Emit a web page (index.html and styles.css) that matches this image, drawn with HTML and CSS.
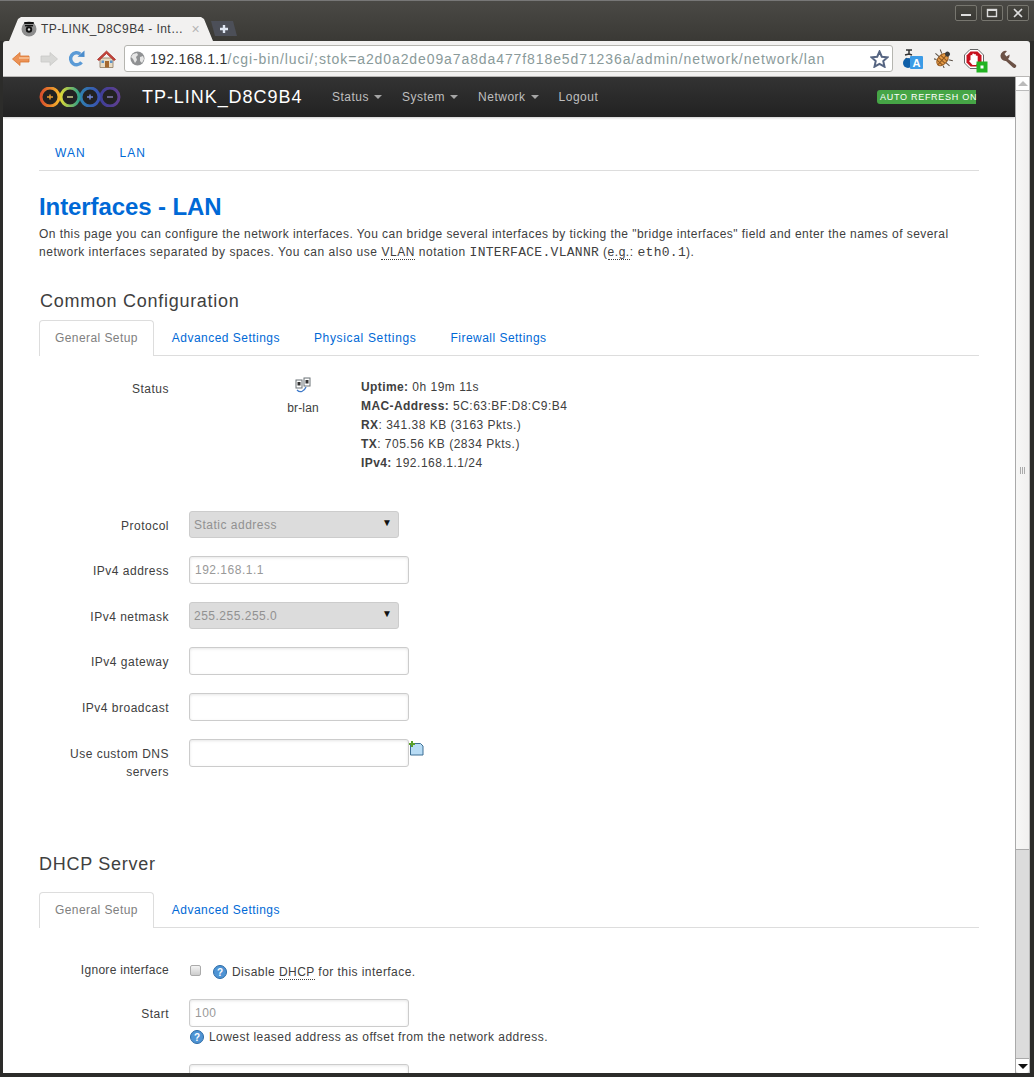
FILE: index.html
```html
<!DOCTYPE html>
<html lang="en">
<head>
<meta charset="utf-8">
<title>TP-LINK_D8C9B4 - Interfaces - LAN</title>
<link rel="stylesheet" href="styles.css">
</head>
<body>
<div class="window">
  <header class="titlebar">
    <div class="tabstrip">
      <div class="tab">
        <svg class="favicon" width="16" height="16" viewBox="0 0 16 16"><circle cx="8" cy="8" r="7.5" fill="#8d8d8d"/><rect x="3" y="1" width="10" height="2" rx="1" fill="#111"/><rect x="4" y="4" width="8" height="1.4" fill="#111"/><circle cx="8" cy="8.5" r="3.2" fill="#111"/><circle cx="8" cy="8.5" r="1.2" fill="#ddd"/></svg>
        <span class="tab-title">TP-LINK_D8C9B4 - Int…</span>
        <span class="tab-close">×</span>
      </div>
      <div class="newtab"><svg width="10" height="10" viewBox="0 0 10 10"><path d="M5 1v8M1 5h8" stroke="#dfe6f2" stroke-width="2.4"/></svg></div>
    </div>
    <div class="winbtns">
      <div class="winbtn"><svg width="12" height="10" viewBox="0 0 12 10"><path d="M1 7h10" stroke="#ddd" stroke-width="2"/></svg></div>
      <div class="winbtn"><svg width="12" height="10" viewBox="0 0 12 10"><rect x="1.500" y="1.500" width="9" height="7" fill="none" stroke="#ddd" stroke-width="1.400"/><path d="M1 2h10" stroke="#ddd" stroke-width="2"/></svg></div>
      <div class="winbtn"><svg width="12" height="10" viewBox="0 0 12 10"><path d="M2 1l8 8M10 1l-8 8" stroke="#ddd" stroke-width="1.600"/></svg></div>
    </div>
  </header>

  <div class="toolbar">
    <div class="navbtns">
      <svg width="18" height="14" viewBox="0 0 18 14"><path d="M8 .5L.5 7 8 13.500V10h9V4H8z" fill="#ec9255" stroke="#d9752f" stroke-width=".8"/><path d="M7 6h10" stroke="#f8c49a" stroke-width="1.500"/></svg>
      <svg width="18" height="14" viewBox="0 0 18 14"><path d="M10 .5L17.500 7 10 13.500V10H1V4h9z" fill="#d8d8d6" stroke="#c9c9c7" stroke-width=".8"/></svg>
      <svg width="17" height="17" viewBox="0 0 17 17"><path d="M13.500 12.200A6 6 0 1 1 12.300 4" fill="none" stroke="#5a9ad6" stroke-width="3.400"/><path d="M9.500 6.800L16.500 7V.5z" fill="#4a8ccc"/></svg>
      <svg width="19" height="18" viewBox="0 0 19 18"><path d="M3 8h13v9.500H3z" fill="#e8dcc4" stroke="#8d7a60" stroke-width=".8"/><path d="M.5 9.500L9.500 1l9 8.500-1.500 1-7.500-7-7.500 7z" fill="#c8443a" stroke="#a52f28" stroke-width=".8"/><rect x="8" y="11" width="4" height="6.500" fill="#a4692f"/><rect x="4.500" y="10.500" width="2.500" height="2.500" fill="#5d93c8"/><rect x="13" y="10.500" width="2.500" height="2.500" fill="#5d93c8"/></svg>
    </div>
    <div class="omnibox">
      <svg class="globe" width="15" height="15" viewBox="0 0 15 15"><circle cx="7.500" cy="7.500" r="7" fill="#8f9193"/><path d="M3 3l4-1 1 2-2 2 1 3-2 3-2-4-2-2zM10 6l3-1 1 3-2 4-2-2z" fill="#e6e6e6"/></svg>
      <span class="url"><span class="url-host">192.168.1.1</span>/cgi-bin/luci/;stok=a2d0a2de09a7a8da477f818e5d71236a/admin/network/network/lan</span>
      <svg class="star" width="19" height="18" viewBox="0 0 19 18"><path d="M9.500 1.500l2.300 5.200 5.700.6-4.200 3.800 1.200 5.600-5-2.900-5 2.900 1.200-5.600L1.500 7.300l5.700-.6z" fill="#fff" stroke="#566582" stroke-width="2"/></svg>
    </div>
    <div class="exts">
      <svg width="21" height="20" viewBox="0 0 21 20"><path d="M4 1h6M7 1v4M3 6l4-1 3 1M4 9c1 3 4 5 6 5" fill="none" stroke="#333" stroke-width="1.500"/><circle cx="6" cy="14" r="5" fill="#0f5fa8"/><rect x="8" y="7" width="13" height="13" rx="1" fill="#3b9be6"/><text x="14.500" y="17.500" class="ext-a">A</text></svg>
      <svg width="19" height="19" viewBox="0 0 19 19"><g transform="rotate(42 9.500 9.500)"><ellipse cx="9.500" cy="11" rx="4.500" ry="7" fill="#e59a45" stroke="#9c5f24"/><path d="M5.500 9h8M5.500 12h8M5.800 15h7.400M9.500 4v14" stroke="#8c5620"/><circle cx="9.500" cy="3.500" r="2.500" fill="#3a3a3a"/><path d="M5 7L1 5M5 11H0M5 15l-4 2M14 7l4-2M14 11h5M14 15l4 2" stroke="#5a5046"/></g></svg>
      <svg class="ext-stop" width="24" height="24" viewBox="0 0 24 24"><path d="M6 .5h8L19.500 6v8L14 19.500H6L.5 14V6z" fill="#fff" stroke="#666"/><path d="M6.500 2.500h7l4 4v7l-4 4h-7l-4-4v-7z" fill="#c8101e"/><path d="M6.500 11V6.500a1 1 0 0 1 1.800 0V5a1 1 0 0 1 1.800 0v.5a1 1 0 0 1 1.800 0V7a1 1 0 0 1 1.800 0v6l-1.500 3H8.500L5 12z" fill="#fff"/><rect x="12.500" y="12.500" width="11" height="11" fill="#22b322"/><rect x="16.500" y="16.500" width="3" height="3" fill="#fff"/></svg>
      <svg width="18" height="18" viewBox="0 0 18 18"><path d="M1.500 5.500A5 5 0 0 1 8 1L5.500 4l2 2.500 3-2a5 5 0 0 1-1.500 4.500l8 6a2 2 0 0 1-3 2.500l-7-6.500A5 5 0 0 1 1.500 5.500z" fill="#6c5246"/></svg>
    </div>
  </div>

  <div class="viewport">
    <div class="page">
      <nav class="navbar">
        <svg class="logo" width="82" height="20" viewBox="0 0 82 20">
          <defs>
            <linearGradient id="ring1" x1="0" x2="1" y1="0" y2="0"><stop offset="0" stop-color="#d94f2b"/><stop offset="1" stop-color="#f5b52c"/></linearGradient>
            <linearGradient id="ring2" x1="0" x2="1" y1="0" y2="0"><stop offset="0" stop-color="#d8d838"/><stop offset="1" stop-color="#2f9f88"/></linearGradient>
            <linearGradient id="ring3" x1="0" x2="1" y1="0" y2="0"><stop offset="0" stop-color="#2f7fb0"/><stop offset="1" stop-color="#3a4fb0"/></linearGradient>
            <linearGradient id="ring4" x1="0" x2="1" y1="0" y2="0"><stop offset="0" stop-color="#3f3f98"/><stop offset="1" stop-color="#5f3f8f"/></linearGradient>
          </defs>
          <circle cx="71" cy="10" r="9" fill="#222" stroke="url(#ring4)" stroke-width="3"/>
          <circle cx="51" cy="10" r="9" fill="#222" stroke="url(#ring3)" stroke-width="3"/>
          <circle cx="31" cy="10" r="9" fill="#222" stroke="url(#ring2)" stroke-width="3"/>
          <circle cx="11" cy="10" r="9" fill="#222" stroke="url(#ring1)" stroke-width="3"/>
          <path d="M8 10h6M11 7.500v5" stroke="#e89a30" stroke-width="1.400"/>
          <path d="M28 10h6" stroke="#d8dc90" stroke-width="1.400"/>
          <path d="M48 10h6M51 7.500v5" stroke="#7088d8" stroke-width="1.400"/>
          <path d="M68 10h6" stroke="#8880b8" stroke-width="1.400"/>
        </svg>
        <a class="brand">TP-LINK_D8C9B4</a>
        <ul class="mainmenu">
          <li class="menuitem">Status<span class="caret"></span></li>
          <li class="menuitem">System<span class="caret"></span></li>
          <li class="menuitem">Network<span class="caret"></span></li>
          <li class="menuitem">Logout</li>
        </ul>
        <span class="refresh">AUTO REFRESH ON</span>
      </nav>

      <main class="container">
        <ul class="subtabs">
          <li class="subtab">WAN</li>
          <li class="subtab">LAN</li>
        </ul>
        <h2 class="page-title">Interfaces - LAN</h2>
        <p class="intro"><span class="intro-first">On this page you can configure the network interfaces. You can bridge several interfaces by ticking the "bridge interfaces" field and enter the names of several</span> network interfaces separated by spaces. You can also use <abbr class="abbr">VLAN</abbr> notation <code class="code">INTERFACE.VLANNR</code> (<abbr class="abbr">e.g.</abbr>: <code class="code">eth0.1</code>).</p>

        <h3 class="section-title first">Common Configuration</h3>
        <ul class="cbi-tabs">
          <li class="cbi-tab active">General Setup</li>
          <li class="cbi-tab">Advanced Settings</li>
          <li class="cbi-tab wide">Physical Settings</li>
          <li class="cbi-tab">Firewall Settings</li>
        </ul>

        <div class="status-row">
          <div class="field-label">Status</div>
          <div class="if-icon">
            <svg width="16" height="16" viewBox="0 0 16 16"><rect x="1" y="3" width="6" height="8" fill="#fff" stroke="#6b7276"/><rect x="2.500" y="5" width="3" height="3.500" fill="#333"/><rect x="9" y="1" width="6" height="8" fill="#fff" stroke="#6b7276"/><rect x="10.500" y="3" width="3" height="3.500" fill="#333"/><path d="M2 13c3 3 7 2 9-3" fill="none" stroke="#3d78c8" stroke-width="1.300"/></svg>
            <span class="if-name">br-lan</span>
          </div>
          <div class="if-info">
            <div><strong>Uptime:</strong> 0h 19m 11s</div>
            <div><strong>MAC-Address:</strong> 5C:63:BF:D8:C9:B4</div>
            <div><strong>RX</strong>: 341.38 KB (3163 Pkts.)</div>
            <div><strong>TX</strong>: 705.56 KB (2834 Pkts.)</div>
            <div><strong>IPv4:</strong> 192.168.1.1/24</div>
          </div>
        </div>

        <div class="form-row protocol">
          <div class="field-label">Protocol</div>
          <div class="fake-select">Static address<span class="sel-arrow">▼</span></div>
        </div>
        <div class="form-row">
          <div class="field-label">IPv4 address</div>
          <div class="fake-input">192.168.1.1</div>
        </div>
        <div class="form-row">
          <div class="field-label">IPv4 netmask</div>
          <div class="fake-select">255.255.255.0<span class="sel-arrow">▼</span></div>
        </div>
        <div class="form-row">
          <div class="field-label">IPv4 gateway</div>
          <div class="fake-input"></div>
        </div>
        <div class="form-row">
          <div class="field-label">IPv4 broadcast</div>
          <div class="fake-input"></div>
        </div>
        <div class="form-row">
          <div class="field-label">Use custom DNS<br>servers</div>
          <div class="fake-input"></div>
          <svg class="add-icon" width="15" height="15" viewBox="0 0 15 15"><path d="M1.500 2.500h10l2.500 2.500v9H1.500z" fill="#b8dcf5" stroke="#3d6f94"/><path d="M3 0v6M0 3h6" stroke="#5aa02c" stroke-width="2"/></svg>
        </div>

        <h3 class="section-title second">DHCP Server</h3>
        <ul class="cbi-tabs">
          <li class="cbi-tab active">General Setup</li>
          <li class="cbi-tab">Advanced Settings</li>
        </ul>

        <div class="form-row ignore">
          <div class="field-label">Ignore interface</div>
          <div class="check-line">
            <span class="checkbox"></span>
            <svg class="help" width="14" height="14" viewBox="0 0 14 14"><circle cx="7" cy="7" r="6.500" fill="#4f94d4" stroke="#2c6aa5"/><text x="7" y="10.500" class="help-q">?</text></svg>
            <span class="hint">Disable <abbr class="abbr">DHCP</abbr> for this interface.</span>
          </div>
        </div>
        <div class="form-row start">
          <div class="field-label">Start</div>
          <div class="control-stack">
            <div class="fake-input">100</div>
            <div class="help-line">
              <svg class="help" width="14" height="14" viewBox="0 0 14 14"><circle cx="7" cy="7" r="6.500" fill="#4f94d4" stroke="#2c6aa5"/><text x="7" y="10.500" class="help-q">?</text></svg>
              <span class="hint">Lowest leased address as offset from the network address.</span>
            </div>
          </div>
        </div>
        <div class="form-row">
          <div class="field-label"></div>
          <div class="fake-input"></div>
        </div>
      </main>
    </div>
    <div class="scrollbar">
      <div class="sb-btn top"><span class="sb-up"></span></div>
      <div class="sb-thumb"><span class="sb-grip"></span></div>
      <div class="sb-track"></div>
      <div class="sb-btn bottom"><span class="sb-down"></span></div>
    </div>
  </div>
</div>
</body>
</html>
```

FILE: styles.css
```css
* { box-sizing: border-box; }
html, body { margin: 0; height: 1077px; overflow: hidden; background: #2c2c2a; }
body { font-family: "Liberation Sans", Arial, sans-serif; font-size: 12px; color: #404040; letter-spacing: .5px; }
ul { list-style: none; margin: 0; padding: 0; }

.window { height: 1073px; margin: 0 4px 0 3px; display: flex; flex-direction: column; }

.titlebar { height: 41px; flex: none; background: linear-gradient(#4a4945, #3a3935); display: flex; justify-content: space-between; margin: 0 -4px 0 -3px; padding: 0 5px 0 0; border-top: 1px solid #777; }
.tabstrip { display: flex; align-items: flex-end; padding-left: 5px; }
.tab { width: 208px; height: 24px; background: #f2f1f0; clip-path: polygon(0 100%, 4px 100%, 13px 2px, 16px 0, 196px 0, 199px 2px, 208px 100%); display: flex; align-items: center; padding: 0 0 0 16px; color: #3c3c3c; }
.favicon { flex: none; margin-right: 4px; margin-top: -1px; }
.tab-title { white-space: nowrap; font-size: 12px; letter-spacing: .4px; }
.tab-close { margin-left: 8px; color: #b5b5b5; font-size: 14px; letter-spacing: 0; }
.newtab { width: 26px; height: 15px; margin: 0 0 5px -2px; background: #4c4f58; clip-path: polygon(0 0, 22px 0, 26px 100%, 4px 100%); display: flex; align-items: center; justify-content: center; }
.winbtns { display: flex; gap: 4px; padding-top: 4px; }
.winbtn { width: 22px; height: 16px; border: 1px solid #77766f; border-radius: 2px; background: linear-gradient(#46453f, #3a3935); display: flex; align-items: center; justify-content: center; }

.toolbar { height: 36px; flex: none; background: #f2f1f0; border-bottom: 1px solid #b9b7b5; display: flex; align-items: center; border-radius: 3px 3px 0 0; padding: 0 13px 0 9px; }
.navbtns { display: flex; align-items: center; gap: 10px; width: 112px; flex: none; }
.navbtns svg:nth-child(3) { margin-right: 2px; }
.omnibox { width: 769px; height: 27px; background: #fff; border: 1px solid #b5b5b0; border-radius: 3px; display: flex; align-items: center; padding: 0 3px 0 5px; flex: none; }
.globe { flex: none; margin-right: 5px; }
.url { flex: 1; white-space: nowrap; overflow: hidden; font-size: 14px; letter-spacing: .9px; color: #8a9a9a; }
.url-host { color: #333; letter-spacing: .33px; }
.star { flex: none; }
.exts { display: flex; align-items: center; margin-left: 9px; gap: 11px; }
.ext-stop { margin: 4px 0 0 0; }
.ext-a { font: bold 11px "Liberation Sans", sans-serif; fill: #fff; text-anchor: middle; letter-spacing: 0; }

.viewport { flex: 1; min-height: 0; display: flex; overflow: hidden; background: #fff; }
.page { flex: 1; min-width: 0; overflow: hidden; }

.navbar { height: 40px; background: linear-gradient(#333, #222); box-shadow: 0 1px 2px rgba(0,0,0,.2); display: flex; align-items: center; padding: 0 39px 0 36px; position: relative; }
.logo { flex: none; margin-right: 21px; }
.brand { color: #fff; font-size: 18px; letter-spacing: .95px; width: 190px; flex: none; }
.mainmenu { display: flex; flex: 1; gap: 20px; letter-spacing: .5px; }
.menuitem { color: #bfbfbf; white-space: nowrap; }
.caret { display: inline-block; border: 4px solid transparent; border-top-color: #a5a5a5; border-bottom: 0; margin-left: 5px; vertical-align: 2px; }
.refresh { background: #46a546; color: #fff; font-size: 9px; letter-spacing: .72px; line-height: 14px; height: 14px; padding: 0 0 0 3px; border-radius: 3px 0 0 3px; width: 99px; white-space: nowrap; }

.container { width: 940px; margin-left: 36px; }
.subtabs { display: flex; height: 54px; border-bottom: 1px solid #ddd; align-items: center; padding: 19px 0 0 16px; gap: 34px; color: #0069d6; }
.subtab { color: #0069d6; letter-spacing: 1px; }
.page-title { margin: 22px 0 0; color: #0069d6; font-size: 24px; line-height: 28px; font-weight: bold; letter-spacing: -.1px; }
.intro { margin: 4px 0 0; line-height: 18px; letter-spacing: .53px; }
.intro-first { letter-spacing: .445px; }
.abbr { border-bottom: 1px dotted #404040; text-decoration: none; }
.code { font-family: "Liberation Mono", monospace; font-size: 13px; line-height: 0; letter-spacing: .3px; }

.section-title { margin: 0; font-weight: normal; color: #404040; font-size: 18px; line-height: 24px; letter-spacing: .72px; padding-left: 1px; }
.section-title.first { margin-top: 28px; }
.section-title.second { margin: 71px 0 16px; padding-left: 0; }

.cbi-tabs { display: flex; height: 36px; margin-top: 7px; border-bottom: 1px solid #ddd; }
.cbi-tab { color: #0069d6; padding: 0 17px; line-height: 36px; letter-spacing: .47px; }
.cbi-tab.wide { letter-spacing: .66px; }
.cbi-tab.active { color: #808080; background: #fff; border: 1px solid #ddd; border-bottom: 0; border-radius: 4px 4px 0 0; height: 36px; padding: 0 15px; margin-right: 1px; line-height: 34px; letter-spacing: .42px; }

.status-row { display: grid; grid-template-columns: 130px 150px 1fr; margin-top: 21px; height: 130px; }
.field-label { text-align: right; line-height: 18px; padding-top: 6px; letter-spacing: .5px; }
.status-row .field-label { padding-top: 3px; }
.if-icon { display: flex; flex-direction: column; align-items: center; padding-left: 118px; width: 150px; }
.if-name { margin-top: 6px; line-height: 18px; letter-spacing: .15px; white-space: nowrap; }
.if-info { line-height: 19px; margin-left: 42px; margin-top: 1px; }
.if-info strong { letter-spacing: .4px; }

.form-row { display: grid; grid-template-columns: 130px auto 1fr; column-gap: 20px; justify-items: start; margin-bottom: 18px; }
.form-row .field-label { justify-self: stretch; }
.protocol { margin-top: 4px; }
.fake-input { width: 220px; height: 28px; background: #fff; border: 1px solid #ccc; border-radius: 3px; box-shadow: inset 0 1px 3px rgba(0,0,0,.1); line-height: 27px; padding: 0 5px; color: #999; }
.fake-select { width: 210px; height: 27px; background: #dcdcdc; border: 1px solid #ccc; border-radius: 3px; line-height: 26px; padding: 0 4px; color: #919191; display: flex; justify-content: space-between; }
.sel-arrow { color: #111; font-size: 10px; line-height: 22px; letter-spacing: 0; margin-right: 2px; }
.add-icon { margin: 2px 0 0 -20px; }

.ignore { margin-top: 32px; margin-bottom: 19px; }
.form-row.ignore .field-label { padding-top: 1px; letter-spacing: .3px; }
.check-line { display: flex; align-items: center; height: 20px; padding-top: 4px; }
.checkbox { width: 11px; height: 11px; background: linear-gradient(#f4f4f4, #ccc); border: 1px solid #aaa; border-radius: 2px; margin: -4px 12px 0 1px; }
.hint { white-space: nowrap; letter-spacing: .45px; }
.help { flex: none; margin-right: 5px; }
.help-q { font: bold 10px "Liberation Sans", sans-serif; fill: #fff; text-anchor: middle; letter-spacing: 0; }
.help-line { display: flex; align-items: center; margin-top: 1px; height: 18px; padding-left: 1px; }
.control-stack { display: flex; flex-direction: column; }

.scrollbar { flex: none; width: 15px; display: flex; flex-direction: column; background: #dcdcdc; border-left: 1px solid #aaa; border-right: 1px solid #bbb; margin-top: -1px; }
.sb-btn { height: 15px; flex: none; background: #fff; display: flex; align-items: center; justify-content: center; }
.sb-btn.top { border-bottom: 1px solid #bbb; border-top: 1px solid #ccc; }
.sb-btn.bottom { border-top: 1px solid #aaa; border-radius: 0 0 3px 3px; }
.sb-up { border: 5px solid transparent; border-bottom-color: #bbb; border-top: 0; }
.sb-down { border: 5px solid transparent; border-top-color: #111; border-bottom: 0; }
.sb-thumb { flex: none; height: 759px; background: linear-gradient(90deg, #f7f7f6, #f1f0ef); border-bottom: 1px solid #aaa; display: flex; align-items: center; justify-content: center; }
.sb-grip { width: 5px; height: 7px; background: repeating-linear-gradient(90deg, #aaa 0 1px, transparent 1px 2px); }
.sb-track { flex: 1; background: #dcdcdc; }
```
